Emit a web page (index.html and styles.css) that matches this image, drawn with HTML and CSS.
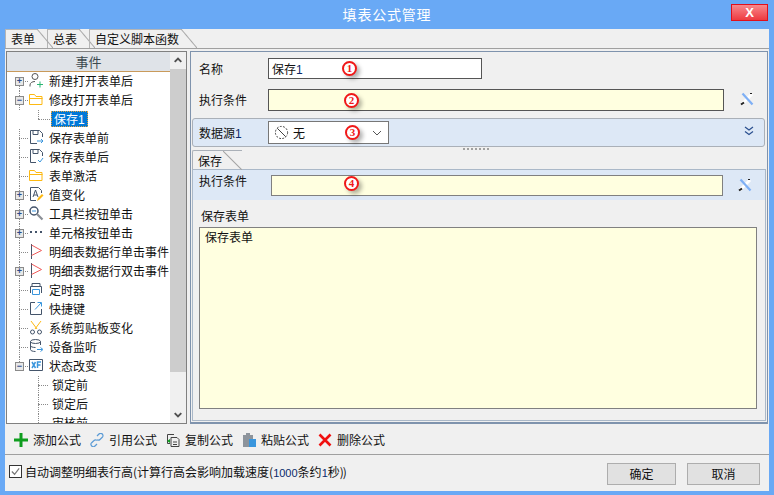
FILE: index.html
```html
<!DOCTYPE html>
<html>
<head>
  <title>填表公式管理</title>
  <meta charset="UTF-8">
  <link rel="stylesheet" href="styles.css">
</head>

<body>
  <div class="titleBar">
    <span class="titleText">填表公式管理</span>
    <a class="closeBtn">X</a>
  </div>

  <div class="client">
    <div class="tabBar">
      <div class="tab tabOn">表单</div>
      <div class="tab">总表</div>
      <div class="tab">自定义脚本函数</div>
    </div>

    <div class="mainRow">
      <!-- left event tree -->
      <div class="treePanel">
        <div class="treeCol">
          <div class="treeHead">事件</div>
          <div class="tree">
            <div class="row first"><span class="twig"><i class="box">+</i></span>
              <svg class="ico" viewBox="0 0 16 16" fill="none"><circle cx="7" cy="4.500" r="3" stroke="#555"/><path d="M2 14.500v-1.500c0-2 2-3.500 5-3.500" stroke="#555"/><path d="M9 12.500h6M12 9.500v6" stroke="#2bb673"/></svg>
              新建打开表单后</div>
            <div class="row"><span class="twig"><i class="box">−</i></span>
              <svg class="ico" viewBox="0 0 16 16" fill="none"><path d="M1.500 13.500v-10h5l1.500 2h6v8z" stroke="#fdb913"/><path d="M1.500 7.500h13" stroke="#fdb913"/></svg>
              修改打开表单后</div>
            <div class="row child"><span class="twig"></span><span class="sel">保存<b class="num">1</b></span></div>
            <div class="row"><span class="twig"></span>
              <svg class="ico" viewBox="0 0 16 16" fill="none"><path d="M9 14.500H2.500v-13h9l3 3V8M5 1.500v4h5v-4" stroke="#44546a"/><path d="M9 12h6M13 10l2 2-2 2" stroke="#3a96dd"/></svg>
              保存表单前</div>
            <div class="row"><span class="twig"></span>
              <svg class="ico" viewBox="0 0 16 16" fill="none"><path d="M8 14.500H2.500v-13h9l3 3V8M5 1.500v4h5v-4" stroke="#44546a"/><path d="M10 12l2 2 3-4" stroke="#3a96dd"/></svg>
              保存表单后</div>
            <div class="row"><span class="twig"></span>
              <svg class="ico" viewBox="0 0 16 16" fill="none"><path d="M1.500 13.500v-10h5l1.500 2h6v8z" stroke="#fdb913"/><path d="M1.500 7.500h13" stroke="#fdb913"/></svg>
              表单激活</div>
            <div class="row"><span class="twig"><i class="box">+</i></span>
              <svg class="ico" viewBox="0 0 16 16" fill="none"><path d="M8 14.500H2.500v-13h8l3 3V7" stroke="#44546a"/><path d="M5 11l2.500-7L10 11M6 9h3" stroke="#44546a"/><path d="M9 15l1-3 4-4 1.500 1.500-4 4z" fill="#fdb913"/></svg>
              值变化</div>
            <div class="row"><span class="twig"><i class="box">+</i></span>
              <svg class="ico" viewBox="0 0 16 16" fill="none"><circle cx="6" cy="6" r="4" stroke="#44546a" stroke-width="1.500"/><path d="M4 6h4" stroke="#3a96dd"/><path d="M9 9l5.500 5.500" stroke="#8a8f96" stroke-width="2.200"/></svg>
              工具栏按钮单击</div>
            <div class="row"><span class="twig"><i class="box">+</i></span>
              <svg class="ico" viewBox="0 0 16 16"><path d="M2 7h2v2H2zM7 7h2v2H7zM12 7h2v2h-2z" fill="#44546a"/></svg>
              单元格按钮单击</div>
            <div class="row"><span class="twig"></span>
              <svg class="ico" viewBox="0 0 16 16" fill="none"><path d="M3.500 1v15" stroke="#44546a"/><path d="M3.500 2l10 5.500-10 5" stroke="#f05a5a"/></svg>
              明细表数据行单击事件</div>
            <div class="row"><span class="twig"><i class="box">+</i></span>
              <svg class="ico" viewBox="0 0 16 16" fill="none"><path d="M3.500 1v15" stroke="#44546a"/><path d="M3.500 2l10 5.500-10 5" stroke="#f05a5a"/></svg>
              明细表数据行双击事件</div>
            <div class="row"><span class="twig"></span>
              <svg class="ico" viewBox="0 0 16 16" fill="none"><path d="M4 5V2.500h8V5M2.500 12V5.500h11V12" stroke="#44546a"/><path d="M4.500 8.500h7v5h-7z" stroke="#3a96dd"/></svg>
              定时器</div>
            <div class="row"><span class="twig"></span>
              <svg class="ico" viewBox="0 0 16 16" fill="none"><path d="M7 2.500H2.500v12h11V9" stroke="#44546a"/><path d="M7 9.500l6-6.500M9.500 2.500h4v4" stroke="#3a96dd"/></svg>
              快捷键</div>
            <div class="row"><span class="twig"></span>
              <svg class="ico" viewBox="0 0 16 16" fill="none"><path d="M3 2l6 8M13 2L7 10" stroke="#fdb913"/><circle cx="4.500" cy="13" r="2" stroke="#44546a"/><circle cx="11.500" cy="13" r="2" stroke="#44546a"/></svg>
              系统剪贴板变化</div>
            <div class="row"><span class="twig"></span>
              <svg class="ico" viewBox="0 0 16 16" fill="none"><ellipse cx="7.500" cy="3.500" rx="5" ry="2" stroke="#44546a"/><path d="M2.500 3.500v8c0 1.200 2 2 5 2M12.500 3.500V7M2.500 7.500c0 1.200 2 2 5 2" stroke="#44546a"/><path d="M9 11.500h5M12.500 9.500l2.500 2-2.500 2" stroke="#3a96dd"/></svg>
              设备监听</div>
            <div class="row last"><span class="twig"><i class="box">−</i></span>
              <svg class="ico" viewBox="0 0 16 16" fill="none"><path d="M1.500 2.500h13v11h-13z" stroke="#44546a"/><path d="M4 5l3.500 6M7.500 5L4 11" stroke="#3a96dd" stroke-width="1.500"/><path d="M9.500 11V5H13M9.500 8H12.500" stroke="#3a96dd" stroke-width="1.500"/></svg>
              状态改变</div>
            <div class="row leaf">锁定前</div>
            <div class="row leaf">锁定后</div>
            <div class="row leaf">审核前</div>
          </div>
        </div>
        <div class="scrollBar">
          <svg class="scrollArrow" viewBox="0 0 17 17" fill="none"><path d="M5 10l3.500-3.500L12 10" stroke="#505050" stroke-width="2"/></svg>
          <div class="scrollThumb"></div>
          <svg class="scrollArrow" viewBox="0 0 17 17" fill="none"><path d="M5 7l3.500 3.500L12 7" stroke="#505050" stroke-width="2"/></svg>
        </div>
      </div>

      <!-- right formula editor -->
      <div class="editPanel">
        <div class="formRow nameRow">
          <label class="lbl">名称</label>
          <div class="input nameInput">保存<b class="num">1</b></div>
          <span class="mark markA">1</span>
        </div>
        <div class="formRow condRow">
          <label class="lbl">执行条件</label>
          <div class="input yellow condInput"></div>
          <svg class="wand" viewBox="0 0 16 16" fill="none"><path d="M3 13L13 3" stroke="#fff" stroke-width="3"/><path d="M2 13.500l3-2" stroke="#222" stroke-width="2"/><path d="M11 2.500h2" stroke="#222"/><path d="M3.500 2.500l10 11" stroke="#7fb0f5" stroke-width="2.200"/></svg>
          <span class="mark markB">2</span>
        </div>
        <div class="sourceBand">
          <label class="lbl">数据源<b class="num">1</b></label>
          <div class="select">
            <svg class="noneIco" viewBox="0 0 16 16" fill="none"><circle cx="8" cy="8" r="6.500" stroke="#333" stroke-dasharray="2 1.500"/><path d="M3.500 3.500l9 9" stroke="#333"/></svg>
            <span>无</span>
            <svg class="caret" viewBox="0 0 10 6" fill="none"><path d="M1 1l4 4 4-4" stroke="#555"/></svg>
          </div>
          <svg class="foldIco" viewBox="0 0 10 10" fill="none"><path d="M1 1l4 3 4-3M1 5.500l4 3 4-3" stroke="#2a4f8f" stroke-width="1.200"/></svg>
          <span class="mark markC">3</span>
        </div>
        <div class="splitDots"></div>
        <div class="subTabBar"><div class="subTab">保存</div></div>
        <div class="subPanel">
          <div class="subCond">
            <label class="lbl">执行条件</label>
            <div class="input yellow subInput"></div>
            <svg class="wand" viewBox="0 0 16 16" fill="none"><path d="M3 13L13 3" stroke="#fff" stroke-width="3"/><path d="M2 13.500l3-2" stroke="#222" stroke-width="2"/><path d="M11 2.500h2" stroke="#222"/><path d="M3.500 2.500l10 11" stroke="#7fb0f5" stroke-width="2.200"/></svg>
            <span class="mark markD">4</span>
          </div>
          <div class="scriptLbl">保存表单</div>
          <div class="scriptBox">保存表单</div>
        </div>
      </div>
    </div>

    <div class="toolBar">
      <span class="tool"><svg viewBox="0 0 14 14"><path d="M5.500 0h3v5.500H14v3H8.500V14h-3V8.500H0v-3h5.500z" fill="#0f9d1f"/></svg>添加公式</span>
      <span class="tool"><svg viewBox="0 0 14 14" fill="none"><path d="M7 3l2-2c1-1 2.500-.8 3.300 0s1 2.300 0 3.300L10 6.500c-1 1-2 .8-3 .2M7 11l-2 2c-1 1-2.500.8-3.300 0s-1-2.300 0-3.300L4 7.500c1-1 2-.8 3-.2" stroke="#5b9bd5" stroke-width="1.200"/></svg>引用公式</span>
      <span class="tool"><svg viewBox="0 0 14 14" fill="none"><path d="M8 1.500H1.500v9H4M5 4.500h6l2 2v7H5z" stroke="#444"/><path d="M7 9h4M7 11.500h4" stroke="#444"/><path d="M1 8l3-2v4z" fill="#0f9d1f"/></svg>复制公式</span>
      <span class="tool"><svg viewBox="0 0 14 14"><path d="M1 2h3V0h4v2h3v4H7v8H1z" fill="#8d949c"/><path d="M7 6h7v8H7z" fill="#3a96dd"/></svg>粘贴公式</span>
      <span class="tool"><svg viewBox="0 0 14 14" fill="none"><path d="M1.500 1.500l11 11M12.500 1.500l-11 11" stroke="#f01010" stroke-width="2.600"/></svg>删除公式</span>
    </div>

    <div class="footer">
      <span class="checkBox"><svg viewBox="0 0 12 12" fill="none"><path d="M2 6l3 3 5-6.500" stroke="#777" stroke-width="1.300"/></svg></span>
      <span class="footText">自动调整明细表行高(计算行高会影响加载速度(<b class="num">1000</b>条约<b class="num">1</b>秒<span class="closers">))</span></span>
      <a class="btn btnOk">确定</a>
      <a class="btn">取消</a>
    </div>
  </div>
</body>

</html>
```

FILE: styles.css
```css
html, body {
  margin: 0;
  height: 495px;
  overflow: hidden;
}
body {
  background-color: #69a9f5;
  font-family: "Noto Sans CJK SC", "Liberation Sans", sans-serif;
  font-size: 12px;
  color: #111;
}
.num {
  font-family: "Liberation Sans", sans-serif;
  font-weight: normal;
  color: #0b2a6b;
}

/* title bar */
.titleBar {
  height: 29px;
  position: relative;
  text-align: center;
}
.titleText {
  color: #fff;
  font-size: 14px;
  letter-spacing: 0.8px;
  line-height: 28px;
}
.closeBtn {
  position: absolute;
  left: 731px;
  top: 4px;
  width: 37px;
  height: 17px;
  box-sizing: border-box;
  border: 1px solid #e0101c;
  background: linear-gradient(#f8888c, #ee3a40);
  color: #fff;
  font: bold 13px/15px "Liberation Sans", sans-serif;
}

/* client */
.client {
  margin: 0 5px;
  height: 462px;
  background-color: #f0f0f0;
}
.tabBar {
  height: 19px;
  display: flex;
  border-bottom: 1px solid #a0a0a0;
  overflow: hidden;
}
.tab {
  position: relative;
  height: 19px;
  padding: 0 18px 0 5px;
  margin-right: -6px;
  line-height: 20px;
  border-left: 1px solid #b5b5b5;
  box-sizing: border-box;
}
.tab::before {
  content: "";
  position: absolute;
  left: 0;
  right: 16px;
  top: 0;
  border-top: 1px solid #b5b5b5;
}
.tab::after {
  content: "";
  position: absolute;
  right: 0;
  top: 0;
  width: 16px;
  height: 19px;
  background: linear-gradient(to top right, transparent calc(50% - 1px), #a8a8a8 50%, transparent calc(50% + 1px));
}
.tabOn {
  z-index: 1;
}

.mainRow {
  height: 373px;
  margin-top: 2px;
  display: flex;
}

/* event tree */
.treePanel {
  width: 181px;
  margin-left: 1px;
  box-sizing: border-box;
  border: 1px solid #808080;
  display: flex;
  background-color: #fff;
}
.treeCol {
  width: 163px;
  overflow: hidden;
}
.treeHead {
  height: 19px;
  line-height: 19px;
  text-align: center;
  font-size: 13px;
  background-color: #dfe3e8;
  border-bottom: 1px solid #c99a5b;
  color: #3c4a4f;
}
.tree {
  height: 352px;
  overflow: hidden;
}
.row {
  height: 19px;
  box-sizing: border-box;
  padding-bottom: 2px;
  line-height: 17px;
  display: flex;
  align-items: center;
  white-space: nowrap;
  position: relative;
}
.twig {
  width: 21px;
  height: 19px;
  flex: none;
  align-self: flex-start;
  position: relative;
}
.twig::before {
  content: "";
  position: absolute;
  left: 12px;
  top: 9px;
  width: 9px;
  border-top: 1px dotted #8a8a8a;
}
.twig::after {
  content: "";
  position: absolute;
  left: 12px;
  top: 0;
  height: 19px;
  border-left: 1px dotted #8a8a8a;
}
.first .twig::after {
  top: 9px;
  height: 10px;
}
.last .twig::after {
  height: 9px;
}
.box {
  position: absolute;
  left: 8px;
  top: 5px;
  width: 7px;
  height: 7px;
  z-index: 1;
  border: 1px solid #8a8a8a;
  background-color: #e8e8e8;
  color: #2c4a8a;
  font: bold 9px/7px "Liberation Sans", sans-serif;
  text-align: center;
}
.ico {
  width: 16px;
  height: 16px;
  flex: none;
  margin: 0 5px 1px 0;
}
.child .twig {
  margin-left: 19px;
}
.child .twig::before {
  left: 12px;
  width: 14px;
}
.child .twig::after {
  height: 9px;
}
.sel {
  margin-left: 4px;
  padding: 0 2px;
  height: 16px;
  line-height: 14px;
  box-sizing: border-box;
  border: 1px dotted #e8a33d;
  background-color: #0078d7;
  color: #fff;
}
.sel .num {
  color: #fff;
}
.leaf {
  padding-left: 45px;
}
.leaf::before {
  content: "";
  position: absolute;
  left: 31px;
  top: 9px;
  width: 10px;
  border-top: 1px dotted #8a8a8a;
}
.leaf::after {
  content: "";
  position: absolute;
  left: 31px;
  top: 0;
  height: 19px;
  border-left: 1px dotted #8a8a8a;
}
.scrollBar {
  width: 16px;
  background-color: #f0f0f0;
  display: flex;
  flex-direction: column;
}
.scrollArrow {
  width: 16px;
  height: 17px;
  flex: none;
}
.scrollThumb {
  height: 303px;
  background-color: #cdcdcd;
  margin-bottom: auto;
}

/* editor */
.editPanel {
  width: 578px;
  margin-left: 3px;
  box-sizing: border-box;
  border: 1px solid #7f93ad;
  border-bottom: 2px solid #7f93ad;
  position: relative;
}
.formRow {
  display: flex;
  align-items: center;
  position: relative;
}
.lbl {
  width: 77px;
  flex: none;
  padding-left: 8px;
  box-sizing: border-box;
}
.input {
  height: 21px;
  box-sizing: border-box;
  border: 1px solid #555;
  background-color: #fff;
  line-height: 19px;
  padding-left: 3px;
}
.yellow {
  background-color: #ffffe0;
}
.nameRow {
  margin-top: 6px;
}
.nameInput {
  width: 214px;
}
.condRow {
  margin-top: 10px;
}
.condRow .lbl {
  margin-bottom: 2px;
}
.condInput {
  width: 456px;
  height: 22px;
}
.wand {
  width: 16px;
  height: 16px;
  margin-left: 15px;
}
.condRow .wand {
  margin-bottom: 3px;
}
.sourceBand {
  margin: 7px 2px 0 1px;
  height: 29px;
  box-sizing: border-box;
  border: 1px solid #aab0b8;
  border-radius: 3px;
  background-color: #dde8f6;
  display: flex;
  align-items: center;
  position: relative;
  padding-left: 6px;
}
.sourceBand .lbl {
  width: 69px;
  padding-left: 0;
  margin-bottom: 1px;
}
.select {
  width: 121px;
  height: 23px;
  box-sizing: border-box;
  border: 1px solid #777;
  background-color: #fff;
  display: flex;
  align-items: center;
  padding: 0 6px 0 5px;
}
.noneIco {
  width: 15px;
  height: 15px;
  margin-right: 4px;
}
.caret {
  width: 10px;
  height: 6px;
  margin-left: auto;
}
.foldIco {
  width: 10px;
  height: 10px;
  margin-left: auto;
  margin-right: 10px;
  margin-bottom: 3px;
}
.splitDots {
  width: 28px;
  height: 2px;
  margin: 1px 0 0 272px;
  background: repeating-linear-gradient(90deg, #a0a0a0 0 2px, transparent 2px 4px);
}
.subTabBar {
  height: 19px;
  margin: 0 2px 0 1px;
}
.subTab {
  width: 50px;
  height: 19px;
  padding-left: 5px;
  box-sizing: border-box;
  line-height: 20px;
  position: relative;
  font-size: 12px;
  border-top: 1px solid #aab0b8;
  border-left: 1px solid #aab0b8;
  border-radius: 2px 0 0 0;
}
.subTab::after {
  content: "";
  position: absolute;
  right: 0;
  top: 0;
  width: 19px;
  height: 19px;
  background: linear-gradient(to top right, transparent calc(50% - 1px), #a8a8a8 50%, transparent calc(50% + 1px));
}
.subPanel {
  margin: 0 1px 0 1px;
  height: 252px;
  box-sizing: border-box;
  border: 1px solid #aab8c8;
}
.subCond {
  height: 30px;
  background-color: #dde8f6;
  display: flex;
  align-items: center;
  position: relative;
  padding-left: 6px;
}
.subCond .lbl {
  width: 72px;
  padding-left: 0;
  margin-bottom: 10px;
}
.subInput {
  width: 452px;
  border-color: #808080;
}
.subCond .wand {
  margin-left: 14px;
}
.scriptLbl {
  margin: 7px 0 0 8px;
  height: 20px;
  line-height: 18px;
}
.scriptBox {
  margin: 0 0 0 6px;
  width: 558px;
  height: 182px;
  box-sizing: border-box;
  border: 1px solid #808080;
  background-color: #ffffe0;
  padding: 0 5px;
  line-height: 17px;
}

/* circled numbers laid over the form */
.mark {
  position: absolute;
  width: 15px;
  height: 15px;
  box-sizing: border-box;
  border: 2px solid #f01818;
  border-radius: 50%;
  background-color: #fff;
  color: #f01818;
  font: bold 11px/11px "Liberation Serif", serif;
  text-align: center;
  box-shadow: 3px 3px 4px rgba(0, 0, 0, 0.3);
}
.markA { left: 151px; top: 3px; }
.markB { left: 153px; top: 4px; }
.markC { left: 152px; top: 6px; }
.markD { left: 151px; top: 6px; }

/* bottom */
.toolBar {
  height: 29px;
  display: flex;
  align-items: center;
  padding-left: 9px;
  border-bottom: 1px solid #a0a0a0;
  margin-top: 1px;
}
.tool {
  display: flex;
  align-items: center;
  margin-right: 9px;
}
.tool svg {
  width: 14px;
  height: 14px;
  margin-right: 5px;
}
.footer {
  height: 36px;
  display: flex;
  align-items: center;
  padding: 0 9px 0 4px;
}
.checkBox {
  width: 13px;
  height: 13px;
  box-sizing: border-box;
  border: 1px solid #333;
  background-color: #fff;
  margin-right: 3px;
  margin-bottom: 3px;
  display: flex;
}
.checkBox svg {
  width: 11px;
  height: 11px;
}
.footText {
  margin-bottom: 4px;
}
.footText .num {
  font-size: 11px;
}
.closers {
  letter-spacing: -1px;
}
.btn {
  width: 69px;
  height: 22px;
  box-sizing: border-box;
  border: 1px solid #adadad;
  background-color: #e1e1e1;
  text-align: center;
  line-height: 20px;
  margin: 2px 0 0 11px;
  font-size: 12px;
}
.btn:last-child {
  width: 73px;
}
.btnOk {
  margin-left: auto;
}
```
